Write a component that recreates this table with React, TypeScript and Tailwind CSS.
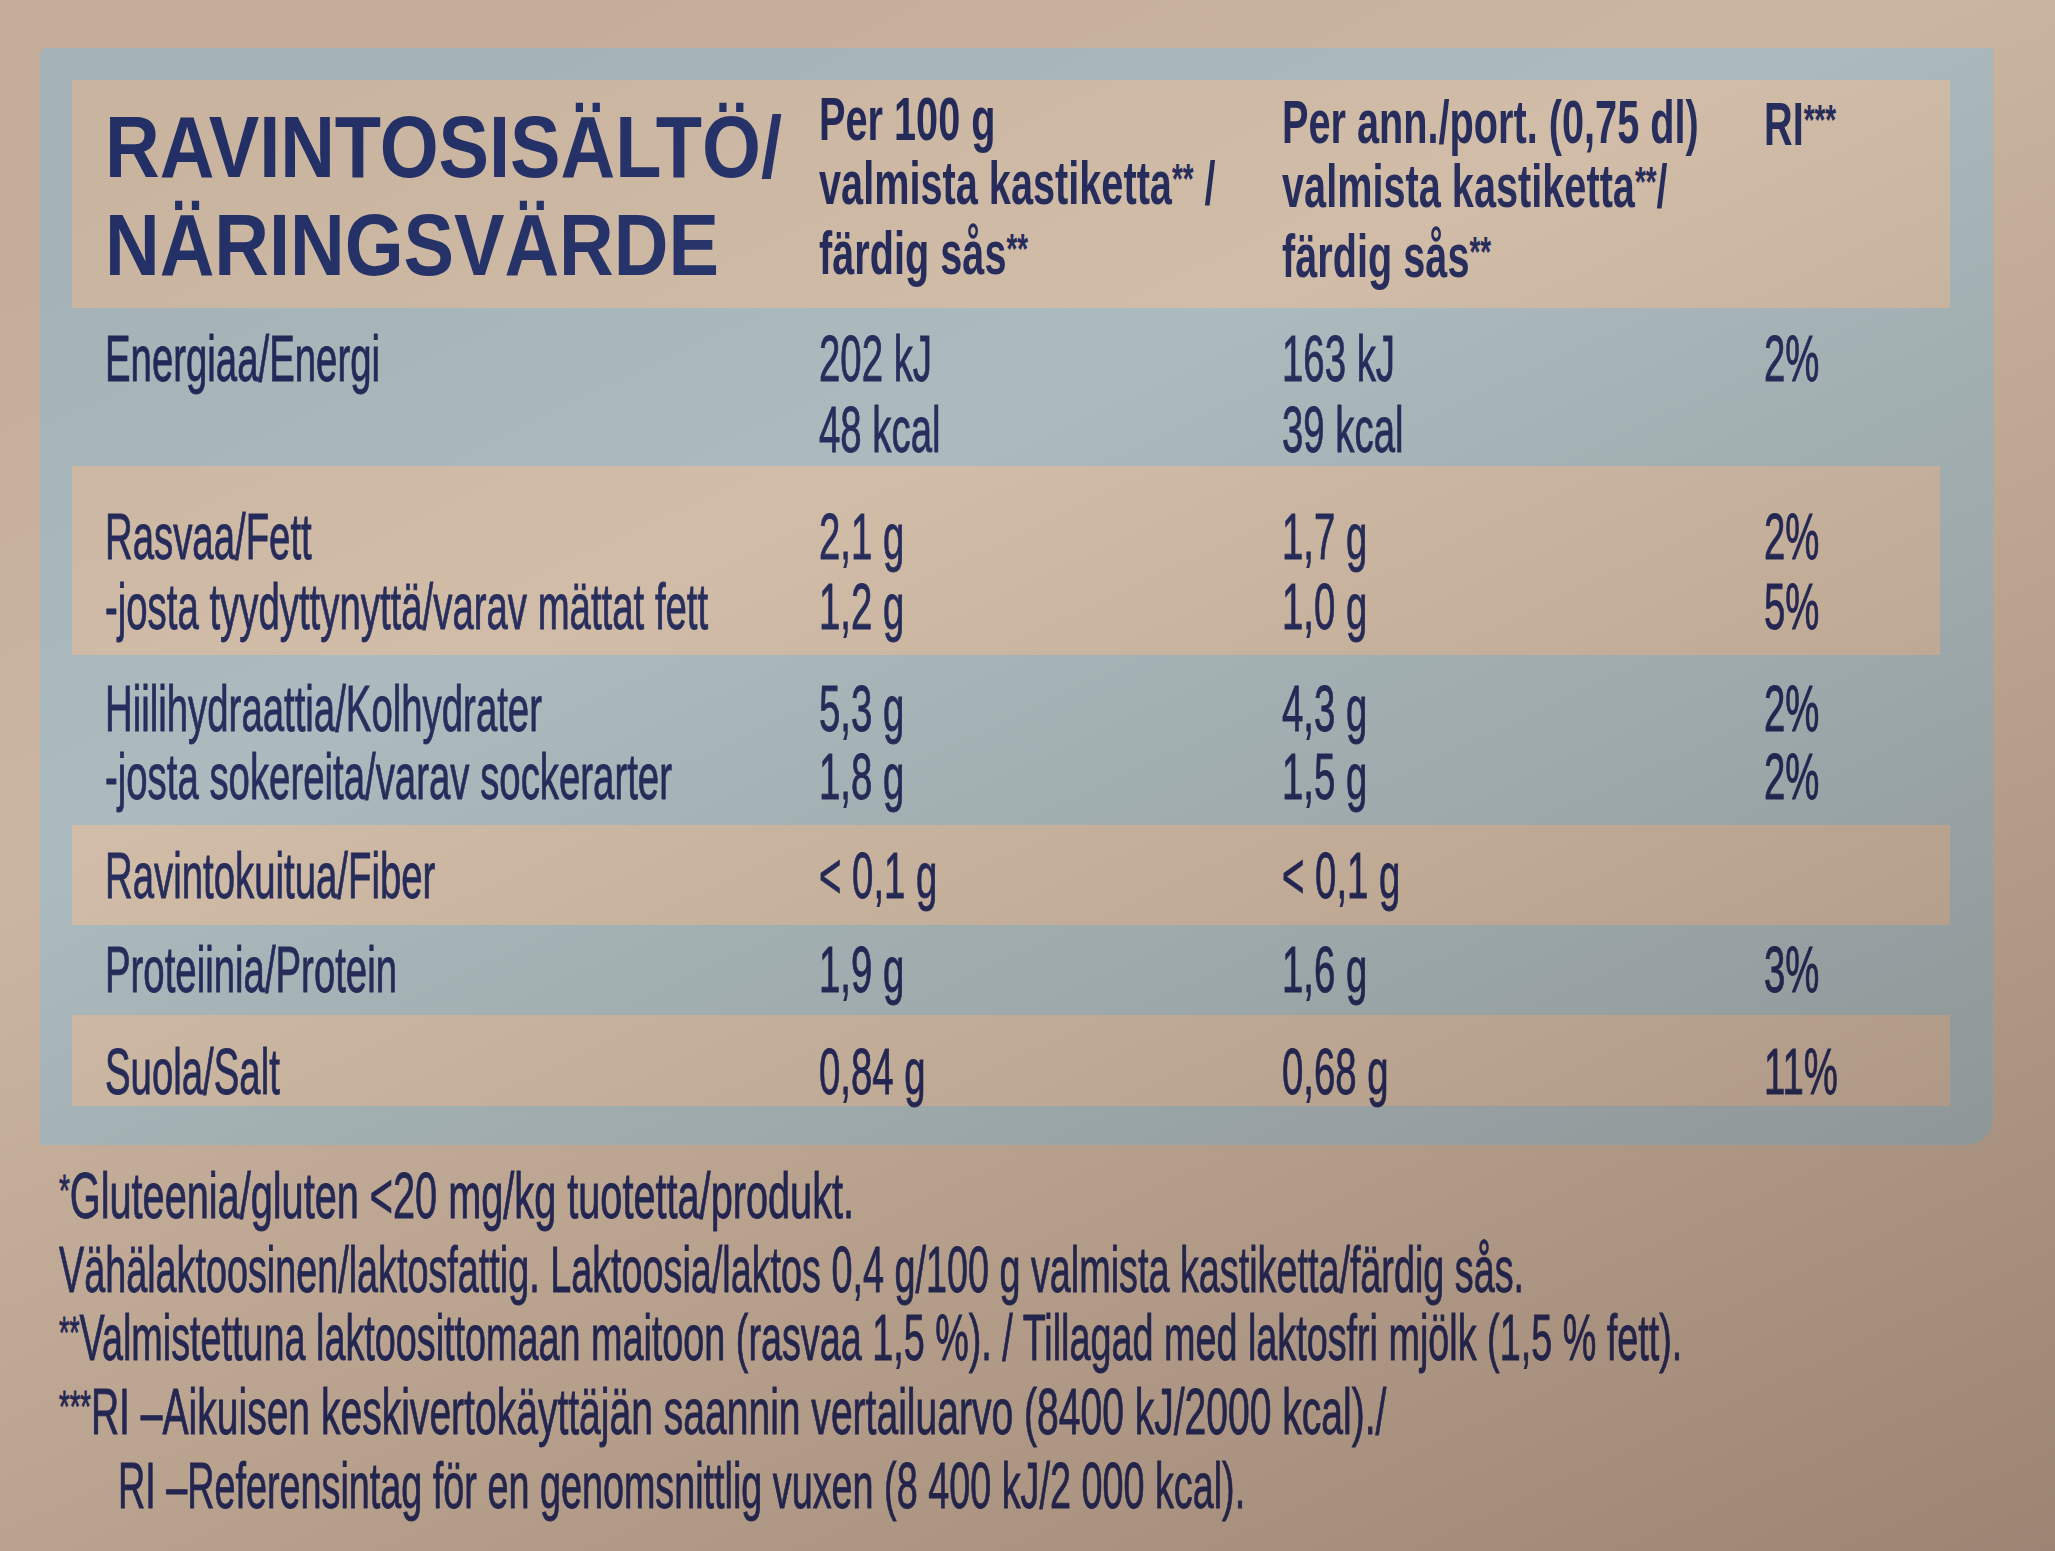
import React from "react";

const beige = "bg-[#cfbaa5]";

const Sup = ({ children }: { children: React.ReactNode }) => (
  <span className="relative -top-[0.26em] text-[0.7em]">{children}</span>
);

// condensed line of body text
const T = ({ children, className = "" }: { children: React.ReactNode; className?: string }) => (
  <div className={`origin-left scale-x-[0.59] whitespace-nowrap [-webkit-text-stroke:0.9px_#1f2657] ${className}`}>{children}</div>
);

const H = ({ children }: { children: React.ReactNode }) => (
  <div className="origin-left scale-x-[0.64] whitespace-nowrap font-bold">{children}</div>
);

const rows = [
  {
    cls: "h-[158px] pt-[15px] leading-[71px]",
    cells: [["Energiaa/Energi"], ["202 kJ", "48 kcal"], ["163 kJ", "39 kcal"], ["2%"]],
  },
  {
    cls: `${beige} h-[189px] pt-[36px] leading-[70px] mr-[10px]`,
    cells: [
      ["Rasvaa/Fett", "-josta tyydyttynyttä/varav mättat fett"],
      ["2,1 g", "1,2 g"],
      ["1,7 g", "1,0 g"],
      ["2%", "5%"],
    ],
  },
  {
    cls: "h-[170px] pt-[20px] leading-[68px]",
    cells: [
      ["Hiilihydraattia/Kolhydrater", "-josta sokereita/varav sockerarter"],
      ["5,3 g", "1,8 g"],
      ["4,3 g", "1,5 g"],
      ["2%", "2%"],
    ],
  },
  {
    cls: `${beige} h-[100px] pt-[16px] leading-[70px]`,
    cells: [["Ravintokuitua/Fiber"], ["< 0,1 g"], ["< 0,1 g"], []],
  },
  {
    cls: "h-[90px] pt-[10px] leading-[70px]",
    cells: [["Proteiinia/Protein"], ["1,9 g"], ["1,6 g"], ["3%"]],
  },
  {
    cls: `${beige} h-[91px] pt-[22px] leading-[70px]`,
    cells: [["Suola/Salt"], ["0,84 g"], ["0,68 g"], ["11%"]],
  },
];

const grid = "grid grid-cols-[714px_463px_482px_1fr] pl-[33px]";

export default function App() {
  return (
    <div className="relative h-[1551px] w-[2055px] overflow-hidden bg-[#c9b39e] font-['Liberation_Sans',Arial,sans-serif] text-[#1f2657]">
      {/* Table frame */}
      <div className="ml-[40px] mt-[48px] w-[1953px] rounded-br-[26px] rounded-tl-[6px] bg-[#a8b8bc] pb-[39px] pl-[32px] pr-[43px] pt-[32px]">
        {/* Header */}
        <div className={`${beige} ${grid} h-[228px]`}>
          <div className="pt-[18px] text-[88px] leading-[98px] text-[#223068]">
            <div className="origin-left scale-x-[0.86] whitespace-nowrap font-bold">RAVINTOSISÄLTÖ/</div>
            <div className="origin-left scale-x-[0.86] whitespace-nowrap font-bold">NÄRINGSVÄRDE</div>
          </div>
          <div className="pt-[7px] text-[62px] leading-[64px]">
            <H>Per 100 g</H>
            <H>
              valmista kastiketta<Sup>**</Sup> /
            </H>
            <H>
              färdig sås<Sup>**</Sup>
            </H>
          </div>
          <div className="pt-[10px] text-[62px] leading-[64px]">
            <H>Per ann./port. (0,75 dl)</H>
            <H>
              valmista kastiketta<Sup>**</Sup>/
            </H>
            <H>
              färdig sås<Sup>**</Sup>
            </H>
          </div>
          <div className="pt-[12px] text-[62px] leading-[64px]">
            <H>
              RI<Sup>***</Sup>
            </H>
          </div>
        </div>

        {rows.map((r, i) => (
          <div key={i} className={`${grid} ${r.cls} text-[65px]`}>
            {r.cells.map((lines, j) => (
              <div key={j}>
                {lines.map((l) => (
                  <T key={l}>{l}</T>
                ))}
              </div>
            ))}
          </div>
        ))}
      </div>

      {/* Footnotes */}
      <div className="pl-[59px] pt-[17px] text-[64px] leading-[68px]">
        <T className="scale-x-[0.62]">
          <Sup>*</Sup>Gluteenia/gluten &lt;20 mg/kg tuotetta/produkt.
        </T>
        <T className="scale-x-[0.6]">
          Vähälaktoosinen/laktosfattig. Laktoosia/laktos 0,4 g/100 g valmista kastiketta/färdig sås.
        </T>
        <T className="scale-x-[0.6]">
          <Sup>**</Sup>Valmistettuna laktoosittomaan maitoon (rasvaa 1,5 %). / Tillagad med laktosfri mjölk (1,5 % fett).
        </T>
        <T className="scale-x-[0.61]">
          <Sup>***</Sup>RI –Aikuisen keskivertokäyttäjän saannin vertailuarvo (8400 kJ/2000 kcal)./
        </T>
        <T className="ml-[59px] scale-x-[0.6]">RI –Referensintag för en genomsnittlig vuxen (8 400 kJ/2 000 kcal).</T>
      </div>

      {/* lighting of the photo */}
      <div className="pointer-events-none absolute inset-0 bg-[linear-gradient(155deg,rgba(60,35,20,0.04)_10%,rgba(255,250,240,0.04)_35%,rgba(60,35,20,0.1)_60%,rgba(50,25,15,0.3)_100%)]" />
    </div>
  );
}
